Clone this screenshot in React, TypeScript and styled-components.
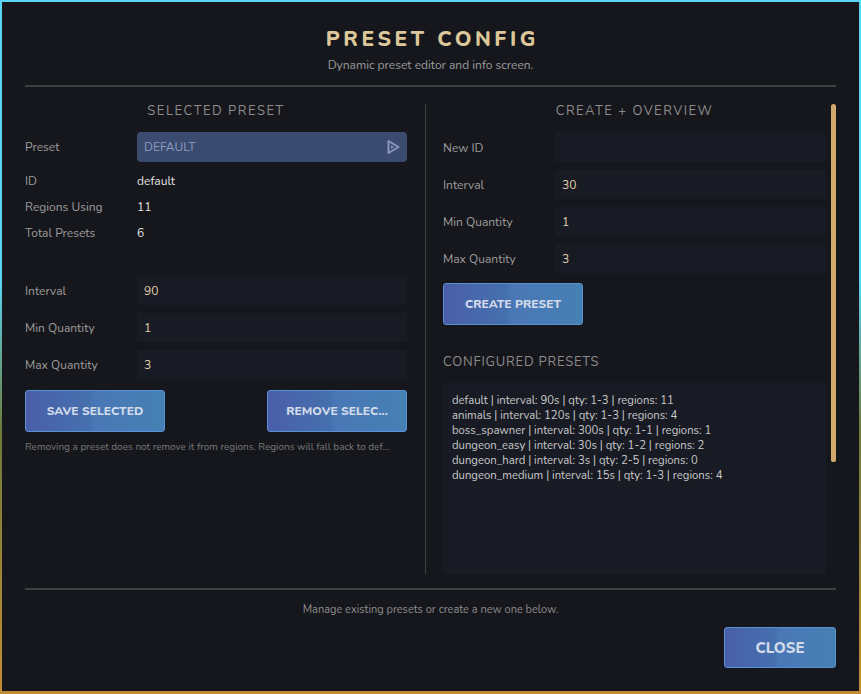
import React from 'react';
import styled, { createGlobalStyle } from 'styled-components';

const GlobalStyle = createGlobalStyle`
    html, body {
        margin: 0;
        padding: 0;
        height: 100%;
    }
    body {
        background: linear-gradient(180deg, #5ad6f4 0%, #5ad6f4 40%, #6d7a3c 62%, #c48d33 100%);
        font-family: "Nunito", "Lato", "Noto Sans", sans-serif;
    }
    #root {
        padding: 2px;
        box-sizing: border-box;
    }
`;

const presets = [
    'default | interval: 90s | qty: 1-3 | regions: 11',
    'animals | interval: 120s | qty: 1-3 | regions: 4',
    'boss_spawner | interval: 300s | qty: 1-1 | regions: 1',
    'dungeon_easy | interval: 30s | qty: 1-2 | regions: 2',
    'dungeon_hard | interval: 3s | qty: 2-5 | regions: 0',
    'dungeon_medium | interval: 15s | qty: 1-3 | regions: 4',
];

const SelectArrow = () => (
    <svg width="14" height="16" viewBox="0 0 14 16">
        <path d="M2.5 2 L12.5 8 L2.5 14 Z" fill="none" stroke="#8796bd" strokeWidth="2" strokeLinejoin="round" />
        <path d="M5 6.3 L8.2 8 L5 9.7 Z" fill="#8796bd" />
    </svg>
);

const App: React.FC = () => {
    return (
        <>
            <GlobalStyle />
            <Panel>
                <Header>
                    <Title>PRESET CONFIG</Title>
                    <Subtitle>Dynamic preset editor and info screen.</Subtitle>
                </Header>

                <Columns>
                    <Column>
                        <SectionTitle $center>SELECTED PRESET</SectionTitle>
                        <FieldRow $mt={13}>
                            <Label>Preset</Label>
                            <Select>
                                <span>DEFAULT</span>
                                <SelectArrow />
                            </Select>
                        </FieldRow>
                        <InfoList>
                            <InfoRow>
                                <Label>ID</Label>
                                <Value>default</Value>
                            </InfoRow>
                            <InfoRow>
                                <Label>Regions Using</Label>
                                <Value>11</Value>
                            </InfoRow>
                            <InfoRow>
                                <Label>Total Presets</Label>
                                <Value>6</Value>
                            </InfoRow>
                        </InfoList>
                        <Fields $mt={30}>
                            <FieldRow>
                                <Label>Interval</Label>
                                <Input>90</Input>
                            </FieldRow>
                            <FieldRow>
                                <Label>Min Quantity</Label>
                                <Input>1</Input>
                            </FieldRow>
                            <FieldRow>
                                <Label>Max Quantity</Label>
                                <Input>3</Input>
                            </FieldRow>
                        </Fields>
                        <ButtonRow>
                            <Button>SAVE SELECTED</Button>
                            <Button>REMOVE SELEC...</Button>
                        </ButtonRow>
                        <Note>Removing a preset does not remove it from regions. Regions will fall back to def...</Note>
                    </Column>

                    <Divider />

                    <ScrollPane>
                        <ScrollContent>
                            <SectionTitle $center>CREATE + OVERVIEW</SectionTitle>
                            <Fields $mt={14}>
                                <FieldRow>
                                    <Label>New ID</Label>
                                    <Input />
                                </FieldRow>
                                <FieldRow>
                                    <Label>Interval</Label>
                                    <Input>30</Input>
                                </FieldRow>
                                <FieldRow>
                                    <Label>Min Quantity</Label>
                                    <Input>1</Input>
                                </FieldRow>
                                <FieldRow>
                                    <Label>Max Quantity</Label>
                                    <Input>3</Input>
                                </FieldRow>
                            </Fields>
                            <CreateRow>
                                <Button>CREATE PRESET</Button>
                            </CreateRow>
                            <SectionTitle $mt={30} $tight>CONFIGURED PRESETS</SectionTitle>
                            <PresetList>
                                {presets.map((line) => (
                                    <div key={line}>{line}</div>
                                ))}
                            </PresetList>
                        </ScrollContent>
                        <ScrollTrack>
                            <ScrollThumb />
                        </ScrollTrack>
                    </ScrollPane>
                </Columns>

                <Footer>
                    <FooterText>Manage existing presets or create a new one below.</FooterText>
                    <CloseRow>
                        <CloseButton>CLOSE</CloseButton>
                    </CloseRow>
                </Footer>
            </Panel>
        </>
    );
};

const Panel = styled.div`
    width: 857px;
    height: 689px;
    box-sizing: border-box;
    padding: 0 23px;
    background: #16171c;
    display: flex;
    flex-direction: column;
    color: #d8d8d8;
`;

const Header = styled.div`
    display: flex;
    flex-direction: column;
    align-items: center;
    padding-top: 24px;
    padding-bottom: 13px;
    border-bottom: 2px solid #3e3f43;
`;

const Title = styled.div`
    font-size: 21px;
    font-weight: 800;
    line-height: 26px;
    letter-spacing: 3.6px;
    margin-right: -3.6px;
    color: #dcc79b;
`;

const Subtitle = styled.div`
    margin-top: 6px;
    font-size: 12px;
    line-height: 14px;
    color: #9b9b9b;
`;

const Columns = styled.div`
    display: grid;
    grid-template-columns: 382px 1px 393px;
    column-gap: 17.5px;
    margin-top: 17px;
    height: 470px;
`;

const Column = styled.div`
    display: flex;
    flex-direction: column;
    min-height: 0;
`;

const ScrollPane = styled.div`
    display: flex;
    gap: 5px;
    min-height: 0;
`;

const ScrollContent = styled(Column)`
    flex: 1;
`;

const ScrollTrack = styled.div`
    width: 5px;
    flex-shrink: 0;
`;

const ScrollThumb = styled.div`
    height: 358px;
    background: #d1a96a;
    border-radius: 3px 3px 2px 2px;
`;

const Divider = styled.div`
    background: #3e3f43;
    width: 1px;
`;

const SectionTitle = styled.div<{ $center?: boolean; $mt?: number; $tight?: boolean }>`
    font-size: 13px;
    line-height: 15px;
    letter-spacing: ${({ $tight }) => ($tight ? '0.8px' : '1.5px')};
    color: #8c8c8c;
    text-align: ${({ $center }) => ($center ? 'center' : 'left')};
    margin-top: ${({ $mt }) => $mt ?? 0}px;
    flex-shrink: 0;
`;

const Fields = styled.div<{ $mt?: number }>`
    display: flex;
    flex-direction: column;
    gap: 8px;
    margin-top: ${({ $mt }) => $mt ?? 0}px;
`;

const FieldRow = styled.div<{ $mt?: number }>`
    display: grid;
    grid-template-columns: 112px 1fr;
    align-items: center;
    margin-top: ${({ $mt }) => $mt ?? 0}px;
`;

const Label = styled.div`
    font-size: 12px;
    color: #9d9d9d;
`;

const Value = styled.div`
    font-size: 12px;
    color: #e2e2e2;
`;

const Select = styled.div`
    height: 30px;
    box-sizing: border-box;
    padding: 0 7px 0 7px;
    border-radius: 4px;
    background: #3b4a6f;
    display: flex;
    align-items: center;
    justify-content: space-between;
    font-size: 12px;
    color: #8e9cc2;
`;

const InfoList = styled.div`
    display: flex;
    flex-direction: column;
    margin-top: 6px;
`;

const InfoRow = styled.div`
    display: grid;
    grid-template-columns: 112px 1fr;
    align-items: center;
    height: 26px;
`;

const Input = styled.div`
    height: 29px;
    box-sizing: border-box;
    padding: 0 7px;
    background: #181b24;
    display: flex;
    align-items: center;
    font-size: 12px;
    color: #e3d2ad;
`;

const ButtonRow = styled.div`
    display: flex;
    justify-content: space-between;
    margin-top: 11px;
`;

const Button = styled.button`
    width: 140px;
    height: 42px;
    box-sizing: border-box;
    border: 1.5px solid #5a90d6;
    border-radius: 3px;
    background: linear-gradient(90deg, #4a5ea9 0%, #4570ae 45%, #4a78b6 50%, #4580b3 100%);
    color: #d3dbea;
    font-family: inherit;
    font-size: 12px;
    font-weight: 800;
    cursor: pointer;
`;

const CreateRow = styled.div`
    margin-top: 10px;
`;

const Note = styled.div`
    margin-top: 9px;
    font-size: 10px;
    line-height: 12px;
    color: #777;
    white-space: nowrap;
`;

const PresetList = styled.div`
    margin-top: 13px;
    flex: 1;
    box-sizing: border-box;
    padding: 10px 9px;
    background: #181b24;
    font-size: 11.3px;
    line-height: 15px;
    color: #c9c9c9;
`;

const Footer = styled.div`
    margin-top: 14px;
    border-top: 2px solid #3e3f43;
    display: flex;
    flex-direction: column;
`;

const FooterText = styled.div`
    margin-top: 13px;
    text-align: center;
    font-size: 11px;
    line-height: 14px;
    color: #8c8c8c;
`;

const CloseRow = styled.div`
    display: flex;
    justify-content: flex-end;
    margin-top: 10px;
`;

const CloseButton = styled(Button)`
    width: 112px;
    height: 41px;
    font-size: 15px;
`;

export default App;
